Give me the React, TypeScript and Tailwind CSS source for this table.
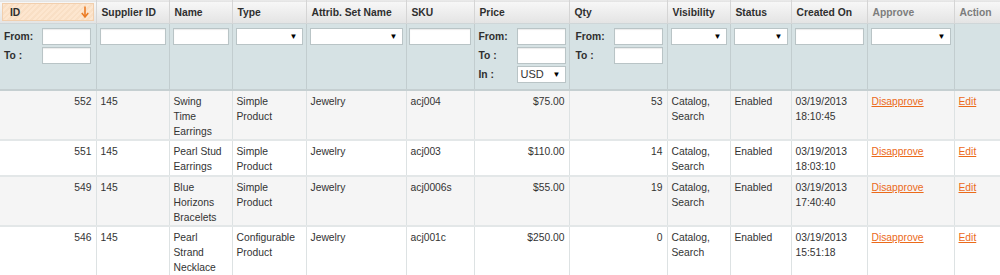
const widths = [96, 73, 63, 74, 100, 68, 95, 98, 63, 61, 76, 87, 46];

type Row = {
  id: string;
  supplier: string;
  name: string[];
  type: string[];
  set: string;
  sku: string;
  price: string;
  qty: string;
  created: string[];
  h: string;
};

const rows: Row[] = [
  { id: "552", supplier: "145", name: ["Swing", "Time", "Earrings"], type: ["Simple", "Product"], set: "Jewelry", sku: "acj004", price: "$75.00", qty: "53", created: ["03/19/2013", "18:10:45"], h: "h-[47px]" },
  { id: "551", supplier: "145", name: ["Pearl Stud", "Earrings"], type: ["Simple", "Product"], set: "Jewelry", sku: "acj003", price: "$110.00", qty: "14", created: ["03/19/2013", "18:03:10"], h: "h-[36px]" },
  { id: "549", supplier: "145", name: ["Blue", "Horizons", "Bracelets"], type: ["Simple", "Product"], set: "Jewelry", sku: "acj0006s", price: "$55.00", qty: "19", created: ["03/19/2013", "17:40:40"], h: "h-[47px]" },
  { id: "546", supplier: "145", name: ["Pearl", "Strand", "Necklace"], type: ["Configurable", "Product"], set: "Jewelry", sku: "acj001c", price: "$250.00", qty: "0", created: ["03/19/2013", "15:51:18"], h: "h-[60px]" },
];

function TextBox({ w }: { w: string }) {
  return <div className={`h-[17px] ${w} bg-white border border-[#b9c4c6] shadow-[inset_0_1px_1px_rgba(0,0,0,0.08)]`} />;
}

function SelectBox({ w, value }: { w: string; value?: string }) {
  return (
    <div className={`h-[17px] ${w} bg-white border border-[#b9c4c6] flex items-center justify-between pl-[3px] pr-[4px]`}>
      <span className="text-[11px] leading-none text-[#333]">{value ?? ""}</span>
      <span className="text-[8px] leading-none text-black">▼</span>
    </div>
  );
}

function Range({ currency }: { currency?: boolean }) {
  return (
    <div className="flex flex-col gap-[2px] pl-[4px]">
      <div className="flex items-center">
        <span className="w-[38px] font-bold">From:</span>
        <TextBox w="w-[49px]" />
      </div>
      <div className="flex items-center">
        <span className="w-[38px] font-bold">To :</span>
        <TextBox w="w-[49px]" />
      </div>
      {currency && (
        <div className="flex items-center">
          <span className="w-[38px] font-bold">In :</span>
          <SelectBox w="w-[49px]" value="USD" />
        </div>
      )}
    </div>
  );
}

const headers = ["Supplier ID", "Name", "Type", "Attrib. Set Name", "SKU", "Price", "Qty", "Visibility", "Status", "Created On"];

export default function App() {
  return (
    <div className="w-[1000px] h-[275px] overflow-hidden bg-white text-[#333] font-['Liberation_Sans',Arial,sans-serif]">
      <table className="table-fixed border-collapse w-[1000px] text-[10.3px] leading-[15px]">
        <colgroup>
          {widths.map((w, i) => (
            <col key={i} style={{ width: w }} />
          ))}
        </colgroup>
        <thead>
          <tr className="h-[22px] bg-[linear-gradient(#f7f7f7,#e4e4e4)] border-t border-[#e9e9e9] border-b border-b-[#cfd6d8]">
            <th className="p-[2px] border-r border-[#d5d5d5] text-left">
              <div className="h-[18px] flex items-center justify-between pl-[7px] pr-[4px] bg-[repeating-linear-gradient(135deg,#fde6cf_0px,#fde6cf_2px,#f9dfc5_2px,#f9dfc5_4px)] border border-[#f1cfae]">
                <span className="font-bold text-[10.3px] text-[#2f2f2f]">ID</span>
                <svg width="8" height="12" viewBox="0 0 8 12">
                  <path d="M4 0.5 V10" stroke="#eb7a22" strokeWidth="1.6" />
                  <path d="M0.8 7 L4 11 L7.2 7" fill="none" stroke="#eb7a22" strokeWidth="1.5" />
                </svg>
              </div>
            </th>
            {headers.map((h) => (
              <th key={h} className="px-[5px] border-r border-[#d5d5d5] text-left font-bold text-[10.3px] text-[#2f2f2f]">
                {h}
              </th>
            ))}
            <th className="px-[5px] border-r border-[#d5d5d5] text-left font-bold text-[10.3px] text-[#7d7d7d]">Approve</th>
            <th className="px-[5px] text-left font-bold text-[10.3px] text-[#7d7d7d]">Action</th>
          </tr>
          <tr className="h-[66px] bg-[#d6e2e4] border-b-2 border-[#c5cfd1] align-top text-[#2f2f2f]">
            <td className="pt-[4px] border-r border-[#c2cdcf]">
              <Range />
            </td>
            <td className="pt-[4px] pl-[3px] border-r border-[#c2cdcf]"><TextBox w="w-[66px]" /></td>
            <td className="pt-[4px] pl-[3px] border-r border-[#c2cdcf]"><TextBox w="w-[56px]" /></td>
            <td className="pt-[4px] pl-[3px] border-r border-[#c2cdcf]"><SelectBox w="w-[67px]" /></td>
            <td className="pt-[4px] pl-[3px] border-r border-[#c2cdcf]"><SelectBox w="w-[93px]" /></td>
            <td className="pt-[4px] pl-[2px] border-r border-[#c2cdcf]"><TextBox w="w-[62px]" /></td>
            <td className="pt-[4px] border-r border-[#c2cdcf]">
              <Range currency />
            </td>
            <td className="pt-[4px] border-r border-[#c2cdcf]">
              <div className="pl-[2px]"><Range /></div>
            </td>
            <td className="pt-[4px] pl-[3px] border-r border-[#c2cdcf]"><SelectBox w="w-[56px]" /></td>
            <td className="pt-[4px] pl-[3px] border-r border-[#c2cdcf]"><SelectBox w="w-[54px]" /></td>
            <td className="pt-[4px] pl-[3px] border-r border-[#c2cdcf]"><TextBox w="w-[69px]" /></td>
            <td className="pt-[4px] pl-[3px] border-r border-[#c2cdcf]"><SelectBox w="w-[80px]" /></td>
            <td />
          </tr>
        </thead>
        <tbody>
          {rows.map((r, i) => (
            <tr key={r.id} className={`${r.h} align-top border-b-2 border-[#e3e7e8] ${i % 2 === 0 ? "bg-[#f5f5f5]" : "bg-white"}`}>
              <td className="pt-[3px] px-[4px] text-right border-r border-[#dde2e3]">{r.id}</td>
              <td className="pt-[3px] px-[4px] border-r border-[#dde2e3]">{r.supplier}</td>
              <td className="pt-[3px] px-[4px] border-r border-[#dde2e3]">{r.name.map((l) => <div key={l}>{l}</div>)}</td>
              <td className="pt-[3px] px-[4px] border-r border-[#dde2e3]">{r.type.map((l) => <div key={l}>{l}</div>)}</td>
              <td className="pt-[3px] px-[4px] border-r border-[#dde2e3]">{r.set}</td>
              <td className="pt-[3px] px-[4px] border-r border-[#dde2e3]">{r.sku}</td>
              <td className="pt-[3px] px-[4px] text-right border-r border-[#dde2e3]">{r.price}</td>
              <td className="pt-[3px] px-[4px] text-right border-r border-[#dde2e3]">{r.qty}</td>
              <td className="pt-[3px] px-[4px] border-r border-[#dde2e3]">
                <div>Catalog,</div>
                <div>Search</div>
              </td>
              <td className="pt-[3px] px-[4px] border-r border-[#dde2e3]">Enabled</td>
              <td className="pt-[3px] px-[4px] border-r border-[#dde2e3]">
                {r.created.map((l) => <div key={l}>{l}</div>)}
              </td>
              <td className="pt-[3px] px-[4px] border-r border-[#dde2e3]">
                <a href="#" className="text-[#eb6a1a] underline">Disapprove</a>
              </td>
              <td className="pt-[3px] px-[4px]">
                <a href="#" className="text-[#eb6a1a] underline">Edit</a>
              </td>
            </tr>
          ))}
        </tbody>
      </table>
    </div>
  );
}
